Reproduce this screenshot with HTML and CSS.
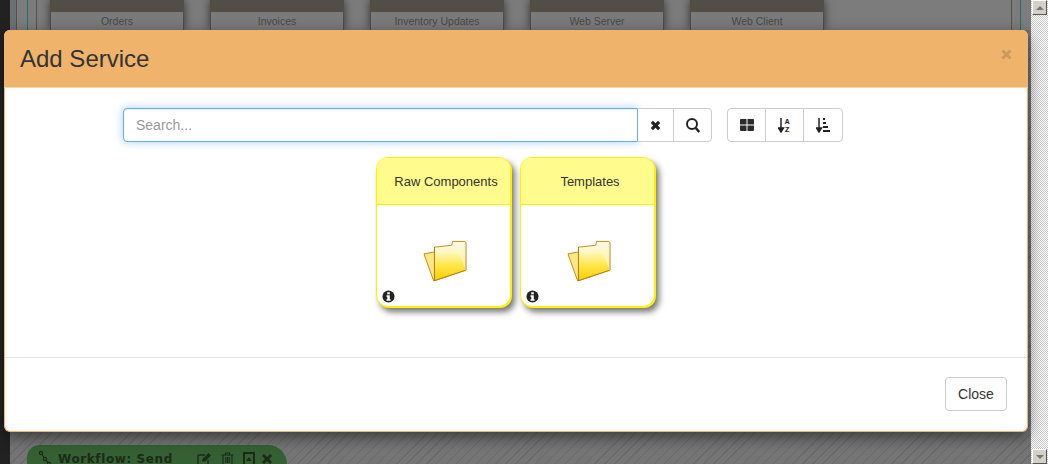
FILE: index.html
```html
<!DOCTYPE html>
<html>
<head>
<meta charset="utf-8">
<title>Add Service</title>
<link rel="stylesheet" href="styles.css">
</head>
<body>

<svg width="0" height="0" class="defs">
  <defs>
    <linearGradient id="folderFront" x1="0" y1="0" x2="0" y2="1">
      <stop offset="0" stop-color="#fff9c8"/>
      <stop offset="0.45" stop-color="#ffe850"/>
      <stop offset="1" stop-color="#ffcc00"/>
    </linearGradient>
    <linearGradient id="folderBack" x1="0" y1="0" x2="0" y2="1">
      <stop offset="0" stop-color="#fffbe0"/>
      <stop offset="1" stop-color="#ffe98a"/>
    </linearGradient>
    <symbol id="folder" viewBox="0 0 46 44">
      <path d="M1 14 L12 12 L24 38 L11 42 Z" fill="#ffe680" stroke="#b8881c" stroke-width="1"/>
      <path d="M12 7 L30 5 L31 1 L43 1 Q45 1 45 3 L45 31 L12 42 Z" fill="url(#folderBack)" stroke="#b8881c" stroke-width="1"/>
      <path d="M12 13 L36 11 L45 31 L12 42 Z" fill="url(#folderFront)"/>
      <path d="M12 7 L12 42 L45 31" fill="none" stroke="#b07c10" stroke-width="1"/>
    </symbol>
    <symbol id="info" viewBox="0 0 14 14">
      <circle cx="7" cy="7" r="6.5" fill="#222"/>
      <rect x="5.6" y="2.4" width="2.8" height="2.2" fill="#fff"/>
      <path d="M4.8 5.7 H8.4 V10 H9.3 V11.6 H4.8 V10 H5.7 V7.3 H4.8 Z" fill="#fff"/>
    </symbol>
  </defs>
</svg>

<div class="page">
  <div class="app">
    <div class="top">
      <div class="rails">
        <span class="rail r1"></span><span class="rail r2 teal"></span><span class="rail r3"></span>
      </div>
      <div class="svc"><div class="svc-head"></div><div class="svc-name">Orders</div></div>
      <div class="svc"><div class="svc-head"></div><div class="svc-name">Invoices</div></div>
      <div class="svc"><div class="svc-head"></div><div class="svc-name">Inventory Updates</div></div>
      <div class="svc"><div class="svc-head"></div><div class="svc-name">Web Server</div></div>
      <div class="svc"><div class="svc-head"></div><div class="svc-name">Web Client</div></div>
      <div class="rails-right">
        <span class="rail r3"></span><span class="rail r3 teal"></span>
      </div>
    </div>
    <div class="workflow">
      <svg class="wf-icon" width="14" height="17" viewBox="0 0 14 17"><g fill="none" stroke="#1c2a18" stroke-width="1.2"><circle cx="3" cy="3" r="1.6"/><circle cx="7" cy="9" r="1.6"/><circle cx="11" cy="14" r="1.6"/><path d="M4 4.5 L6 7.5 M8 10.5 L10 12.5"/></g></svg>
      <span class="wf-title">Workflow: Send</span>
      <span class="wf-tools">
        <svg width="15" height="14" viewBox="0 0 15 14"><path d="M11 8 V12 Q11 13 10 13 H2 Q1 13 1 12 V4 Q1 3 2 3 H8" fill="none" stroke="#1c2a18" stroke-width="1.4"/><path d="M5 9.5 L5.5 7 L11.5 1 L14 3.5 L8 9.5 Z" fill="#1c2a18"/></svg>
        <svg width="13" height="14" viewBox="0 0 13 14"><path d="M0.5 3 H12.5 M4.5 3 V1 H8.5 V3 M2 3 V13 H11 V3 M4.8 5 V11 M6.5 5 V11 M8.2 5 V11" fill="none" stroke="#1c2a18" stroke-width="1.1"/></svg>
        <svg width="12" height="14" viewBox="0 0 12 14"><path d="M1 1 H11 V13 H1 Z" fill="none" stroke="#1c2a18" stroke-width="2"/><path d="M3 9 L6 5 L9 9 Z" fill="#1c2a18"/></svg>
        <svg class="wf-close" width="12" height="12" viewBox="0 0 12 12"><path d="M2 2 L10 10 M10 2 L2 10" stroke="#1c2a18" stroke-width="3"/></svg>
      </span>
    </div>
  </div>
  <div class="scrollbar">
    <div class="sb-btn"><i class="tri-up"></i></div>
    <div class="sb-btn"><i class="tri-down"></i></div>
  </div>
</div>

<div class="modal">
  <div class="modal-header">
    <h4 class="modal-title">Add Service</h4>
    <span class="modal-x">
      <svg width="11" height="11" viewBox="0 0 11 11"><path d="M1.5 1.5 L9.5 9.5 M9.5 1.5 L1.5 9.5" stroke="#c99a5e" stroke-width="2.8"/></svg>
    </span>
  </div>
  <div class="modal-body">
    <div class="toolbar">
      <input type="text" class="search" placeholder="Search...">
      <div class="btn-group attached">
        <button class="tool w36">
          <svg width="11" height="11" viewBox="0 0 12 12"><path d="M2 2 L10 10 M10 2 L2 10" stroke="#222" stroke-width="3.4"/></svg>
        </button>
        <button class="tool w39">
          <svg width="14" height="15" viewBox="0 0 14 15"><circle cx="6" cy="6" r="5" fill="none" stroke="#222" stroke-width="2"/><path d="M9.6 9.8 L13.2 14" stroke="#222" stroke-width="2.4"/></svg>
        </button>
      </div>
      <div class="btn-group">
        <button class="tool w39">
          <svg width="14" height="12" viewBox="0 0 14 12"><path d="M0 1 Q0 0 1 0 H6.5 V5.5 H0 Z M7.5 0 H13 Q14 0 14 1 V5.5 H7.5 Z M0 6.5 H6.5 V12 H1 Q0 12 0 11 Z M7.5 6.5 H14 V11 Q14 12 13 12 H7.5 Z" fill="#2b2b2b"/></svg>
        </button>
        <button class="tool w39">
          <svg width="14" height="16" viewBox="0 0 14 16"><path d="M3 1 V13 M0.5 11 L3 15 L5.5 11 Z" fill="#222" stroke="#222" stroke-width="1.5"/><text x="6.8" y="6.5" class="az">A</text><text x="6.8" y="15" class="az">Z</text></svg>
        </button>
        <button class="tool w40">
          <svg width="14" height="16" viewBox="0 0 14 16"><path d="M3 1 V13 M0.5 11 L3 15 L5.5 11 Z" fill="#222" stroke="#222" stroke-width="1.5"/><path d="M7 1 H9 V3 H7 Z M7 5 H10 V7 H7 Z M7 9 H12 V11 H7 Z M7 13 H14 V15 H7 Z" fill="#222"/></svg>
        </button>
      </div>
    </div>
    <div class="folders">
      <div class="folder-card">
        <div class="folder-head">Raw Components</div>
        <div class="folder-body">
          <svg class="folder-img" width="44" height="43"><use href="#folder"/></svg>
          <svg class="info" width="13" height="13"><use href="#info"/></svg>
        </div>
      </div>
      <div class="folder-card">
        <div class="folder-head">Templates</div>
        <div class="folder-body">
          <svg class="folder-img" width="44" height="43"><use href="#folder"/></svg>
          <svg class="info" width="13" height="13"><use href="#info"/></svg>
        </div>
      </div>
    </div>
  </div>
  <div class="modal-footer">
    <button class="btn-close">Close</button>
  </div>
</div>

</body>
</html>
```

FILE: styles.css
```css
html, body {
  margin: 0;
  height: 100%;
  overflow: hidden;
}

body {
  font-family: "Liberation Sans", Arial, sans-serif;
  color: #333;
}

.defs { position: absolute; }

.page {
  display: flex;
  height: 464px;
  width: 1048px;
}

.app {
  flex: 1;
  min-width: 0;
  display: flex;
  flex-direction: column;
  justify-content: space-between;
  overflow: hidden;
  border-left: 10px solid #222;
  background-color: #757575;
  background-image: repeating-linear-gradient(135deg, transparent 0 6px, #6a6a6a 6px 7px);
}

/* services behind the dialog */
.top {
  display: flex;
  height: 30px;
  background: #7c7c7c;
}

.rails {
  display: flex;
  width: 40px;
  flex: none;
}

.rails-right {
  display: flex;
  margin-left: auto;
  margin-right: 10px;
}

.rail {
  border-right: 1px solid #54504a;
  box-sizing: border-box;
}

.r1 { width: 7px; background: #6a7074; }
.r2 { width: 11px; }
.r3 { width: 9px; }

.rail.teal { border-right-color: #22706a; }

.svc {
  flex: none;
  width: 134px;
  margin-right: 26px;
  box-shadow: 0 0 9px rgba(0, 0, 0, .6);
}

.svc-head {
  height: 12px;
  background: #524e47;
}

.svc-name {
  height: 18px;
  line-height: 18px;
  text-align: center;
  font-size: 10.5px;
  color: #484848;
  background: #7a7a7a;
  border-left: 1px solid #4c4c4c;
  border-right: 1px solid #4c4c4c;
}

.workflow {
  display: flex;
  align-items: center;
  width: 260px;
  height: 19px;
  margin-left: 17px;
  padding: 8px 0 0 11px;
  box-sizing: border-box;
  background: #356033;
  border-radius: 20px 30px 0 0;
  font: bold 12px "DejaVu Sans", sans-serif;
  letter-spacing: 0.6px;
  color: #1c2a18;
  white-space: nowrap;
}

.wf-icon {
  flex: none;
  margin-right: 6px;
}

.wf-title { flex: none; }

.wf-tools {
  display: flex;
  align-items: center;
  gap: 9px;
  margin-left: 24px;
}

.wf-close { margin-left: -3px; }

.scrollbar {
  flex: none;
  width: 17px;
  padding-left: 1px;
  box-sizing: border-box;
  display: flex;
  flex-direction: column;
  justify-content: space-between;
  background-color: #fff;
  background-image: repeating-conic-gradient(#c8c8c8 0 25%, #fff 0 50%);
  background-size: 2px 2px;
}

.sb-btn {
  height: 15px;
  width: 15px;
  display: flex;
  align-items: center;
  justify-content: center;
  background: #d4d0c8;
  border: 1px solid #fff;
  border-right-color: #555;
  border-bottom-color: #555;
  box-sizing: border-box;
}

.tri-up {
  border: 4px solid transparent;
  border-top: 0;
  border-bottom: 4px solid #777;
}

.tri-down {
  border: 4px solid transparent;
  border-bottom: 0;
  border-top: 4px solid #777;
}

/* the dialog */
.modal {
  position: absolute;
  left: 4px;
  top: 30px;
  width: 1024px;
  height: 402px;
  box-sizing: border-box;
  display: flex;
  flex-direction: column;
  background: #fff;
  border: 1px solid #f0b36c;
  border-top: 0;
  border-radius: 6px;
  box-shadow: 0 5px 15px rgba(0, 0, 0, .5);
}

.modal-header {
  height: 58px;
  flex: none;
  box-sizing: border-box;
  display: flex;
  align-items: center;
  justify-content: space-between;
  padding: 0 15px 0 16px;
  background: #f0b36c;
  border-bottom: 1px solid #f6d3a8;
  border-radius: 6px 6px 0 0;
  margin: 0 -1px;
}

.modal-title {
  margin: 0;
  font-size: 24px;
  font-weight: normal;
  color: #333;
}

.modal-x {
  display: flex;
  margin-top: -8px;
  margin-right: 1px;
}

.modal-body {
  flex: 1;
  padding-top: 20px;
}

.toolbar {
  display: flex;
  margin-left: 118px;
  width: 720px;
  height: 34px;
}

.search {
  width: 515px;
  height: 34px;
  box-sizing: border-box;
  padding: 6px 12px;
  font: 14px "Liberation Sans", Arial, sans-serif;
  color: #555;
  background: #fff;
  border: 1px solid #66afe9;
  border-radius: 4px 0 0 4px;
  outline: 0;
  box-shadow: inset 0 1px 1px rgba(0, 0, 0, .075), 0 0 8px rgba(102, 175, 233, .6);
}

.search::placeholder { color: #999; }

.btn-group {
  display: flex;
  height: 34px;
  margin-left: 15px;
}

.btn-group.attached { margin-left: 0; }

.tool {
  display: flex;
  align-items: center;
  justify-content: center;
  height: 34px;
  padding: 0;
  margin-left: -1px;
  background: #fff;
  border: 1px solid #ccc;
}

.btn-group .tool:first-child {
  margin-left: 0;
  border-radius: 4px 0 0 4px;
}

.btn-group .tool:last-child { border-radius: 0 4px 4px 0; }

.btn-group.attached .tool:first-child {
  border-left: 0;
  border-radius: 0;
}

.w36 { width: 36px; }
.w39 { width: 39px; }
.w40 { width: 40px; }

.az {
  font: bold 8px "Liberation Mono", monospace;
  fill: #222;
}

.folders {
  display: flex;
  justify-content: center;
  gap: 9px;
  margin-top: 15px;
  padding-right: 1px;
}

.folder-card {
  width: 135px;
  height: 150px;
  box-sizing: border-box;
  border: 1px solid #fff000;
  border-radius: 12px;
  background: #fff;
  box-shadow: 1px 1px 0 #fff000, 4px 5px 6px rgba(0, 0, 0, .55);
  overflow: hidden;
  display: flex;
  flex-direction: column;
}

.folder-head {
  height: 46px;
  flex: none;
  display: flex;
  align-items: center;
  justify-content: center;
  padding-left: 5px;
  font-size: 13px;
  color: #333;
  background: #fffb8c;
  border-bottom: 1px solid #fff000;
}

.folder-body {
  flex: 1;
  display: flex;
  align-items: flex-end;
  justify-content: center;
  position: relative;
}

.folder-img {
  margin-bottom: 23px;
  margin-left: 2px;
}

.info {
  position: absolute;
  left: 5px;
  bottom: 3px;
}

.modal-footer {
  height: 74px;
  flex: none;
  box-sizing: border-box;
  display: flex;
  justify-content: flex-end;
  align-items: flex-start;
  padding: 19px 20px 0 0;
  border-top: 1px solid #e5e5e5;
}

.btn-close {
  width: 62px;
  height: 34px;
  font: 14px "Liberation Sans", Arial, sans-serif;
  color: #333;
  background: #fff;
  border: 1px solid #ccc;
  border-radius: 4px;
}
```
